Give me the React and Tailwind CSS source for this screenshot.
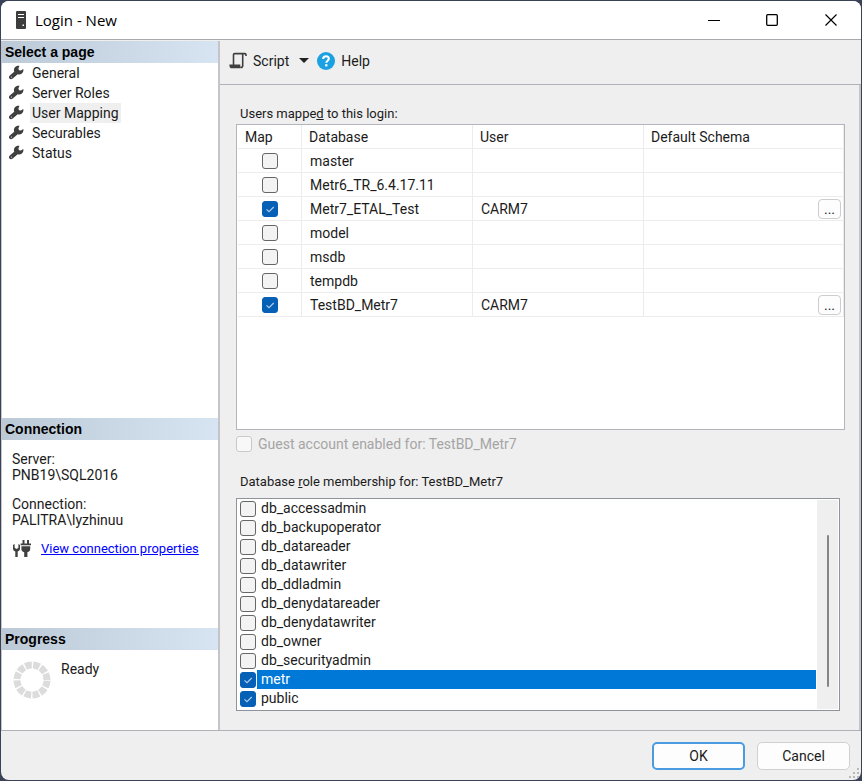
import React from 'react';

const pages = ['General', 'Server Roles', 'User Mapping', 'Securables', 'Status'];

const databases = [
  { name: 'master' },
  { name: 'Metr6_TR_6.4.17.11' },
  { name: 'Metr7_ETAL_Test', user: 'CARM7' },
  { name: 'model' },
  { name: 'msdb' },
  { name: 'tempdb' },
  { name: 'TestBD_Metr7', user: 'CARM7' },
];

const roles = [
  'db_accessadmin',
  'db_backupoperator',
  'db_datareader',
  'db_datawriter',
  'db_ddladmin',
  'db_denydatareader',
  'db_denydatawriter',
  'db_owner',
  'db_securityadmin',
  'metr',
  'public',
];

const WrenchIcon = () => (
  <svg width="16" height="16" viewBox="0 0 16 16" className="shrink-0">
    <path
      d="M11.500.8 10.400 3.400l.6 1.900 1.900.2L15.300 4c.4 1.800-.1 3.400-1.400 4.500-1.200 1-2.700 1.200-4.200.8l-5 4.300c-1 .9-2.400.9-3.200 0-.8-.9-.7-2.300.3-3.200L6.200 6.800C5.600 5 5.900 3.400 7.200 2.100 8.400.9 9.900.5 11.500.8Z"
      fill="#3f3f3f"
    />
    <circle cx="3.400" cy="12" r=".6" fill="#fff" />
  </svg>
);

const ServerIcon = () => (
  <svg width="12" height="18" viewBox="0 0 12 18">
    <rect x="1" width="10" height="18" rx="1" fill="#3d3d3d" />
    <path d="M3 3.500h6M3 6.500h6" stroke="#fff" strokeWidth="1.200" />
    <rect x="7.500" y="13.500" width="1.500" height="1.500" fill="#fff" />
  </svg>
);

const ScriptIcon = () => (
  <svg width="18" height="18" viewBox="0 0 18 18" fill="none" stroke="#3f3f3f" strokeWidth="1.600">
    <path d="M17 4V2.800c0-.8-.4-1.200-1.200-1.200H5.600c-.7 0-1.100.4-1.100 1.100V13" />
    <path d="M13.700 2v11.400c0 1.300-.6 2-1.700 2" />
    <path d="M1.200 13.200h9.300v1.100c0 .8.500 1.200 1.300 1.200H2.800c-1 0-1.600-.6-1.600-2.300Z" fill="#3f3f3f" />
  </svg>
);

const HelpIcon = () => (
  <svg width="18" height="18" viewBox="0 0 18 18">
    <circle cx="9" cy="9" r="9" fill="#1ba1e2" />
    <path d="M6.200 6.900C6.200 5.200 7.400 4.200 9 4.200s2.800 1 2.800 2.500c0 2-2.500 2-2.500 4.100" fill="none" stroke="#fff" strokeWidth="2.100" />
    <rect x="8.200" y="12.200" width="2.200" height="2.200" fill="#fff" />
  </svg>
);

const PlugIcon = () => (
  <svg width="18" height="18" viewBox="0 0 18 18" fill="#3f3f3f">
    <path d="M0 5v3.500c0 1.600.9 2.500 2.300 2.900V17h2.400v-5.600C6.100 11 7 10.100 7 8.500V5L5.400 4v3.800L3.500 8.900 1.600 7.800V4Z" />
    <path d="M9.500 0h2v3.500h2.500V0h2v3.500H18v1.700H7.600V3.500h1.900ZM8.400 6.200h8.800V9c0 1.700-1 2.800-2.800 3.200V17h-3.200v-4.800C9.400 11.800 8.400 10.700 8.400 9Z" />
  </svg>
);

const Spinner = () => (
  <svg width="38" height="38" viewBox="0 0 38 38">
    <circle cx="19" cy="19" r="15" fill="none" stroke="#dcdcdc" strokeWidth="7" strokeDasharray="6.500 1.354" strokeDashoffset="-.68" />
  </svg>
);

const CheckBox = (props) => (
  <span className="inline-grid shrink-0 align-middle">
    <input
      type="checkbox"
      className="peer col-start-1 row-start-1 size-4 appearance-none rounded-[3px] border border-[#666] bg-[#f3f3f3] checked:border-[#0560b6] checked:bg-[#0560b6] disabled:border-[#c9c9c9] disabled:bg-[#f8f8f8]"
      {...props}
    />
    <svg viewBox="0 0 16 16" className="pointer-events-none invisible col-start-1 row-start-1 size-4 peer-checked:visible" fill="none" stroke="#b4d0ec">
      <path d="M4.500 8.300 7 10.700 11.700 6" strokeWidth="1.100" />
    </svg>
  </span>
);

const PanelTitle = ({ children }) => (
  <h2 className="h-[22px] bg-linear-to-r from-[#bccad8] to-[#d7e5f3] pl-[3px] font-['Liberation_Sans',Arial,sans-serif] text-sm leading-[22px] font-bold text-black">
    {children}
  </h2>
);

const TitleBar = () => (
  <header className="flex h-[39px] shrink-0 items-center border-b border-[#a9a9ad] bg-white pl-3.5">
    <ServerIcon />
    <h1 className="ml-2 flex-1 font-['Open_Sans',sans-serif] text-[15px] text-black">Login - New</h1>
    <button aria-label="Minimize" className="grid h-9 w-[58px] place-items-center">
      <svg width="12" height="12" stroke="#000"><path d="M0 6.500h12" /></svg>
    </button>
    <button aria-label="Maximize" className="grid h-9 w-[58px] place-items-center">
      <svg width="12" height="12" fill="none" stroke="#000" strokeWidth="1.300"><rect x=".7" y=".7" width="10.600" height="10.600" rx="1" /></svg>
    </button>
    <button aria-label="Close" className="grid h-9 w-[60px] place-items-center">
      <svg width="12" height="12" stroke="#000" strokeWidth="1.200"><path d="m.5.5 11 11m0-11-11 11" /></svg>
    </button>
  </header>
);

const Sidebar = () => (
  <aside className="flex w-[219px] shrink-0 flex-col border-r-2 border-l border-[#c4c4ca] bg-white">
    <section className="flex-1">
      <PanelTitle>Select a page</PanelTitle>
      <nav>
        {pages.map((page) => (
          <a key={page} href="#" className="flex h-5 items-center gap-1.5 pl-1.5">
            <WrenchIcon />
            <span className={page === 'User Mapping' ? 'bg-[#efefef] px-[2px]' : 'px-[2px]'}>{page}</span>
          </a>
        ))}
      </nav>
    </section>

    <section className="h-[210px]">
      <PanelTitle>Connection</PanelTitle>
      <dl className="mt-[11px] pl-2.5 leading-4">
        <dt>Server:</dt>
        <dd className="mb-[13px]">PNB19\SQL2016</dd>
        <dt>Connection:</dt>
        <dd>PALITRA\lyzhinuu</dd>
      </dl>
      <div className="mt-[11px] flex items-center gap-2.5 pl-[11px]">
        <PlugIcon />
        <a href="#" className="text-[13px] leading-5 text-[#0000ff] underline">View connection properties</a>
      </div>
    </section>

    <section className="h-[102px]">
      <PanelTitle>Progress</PanelTitle>
      <div className="flex items-start gap-2.5 pt-[9px] pl-[11px]">
        <div className="pt-0.5">
          <Spinner />
        </div>
        <p>Ready</p>
      </div>
    </section>
  </aside>
);

const MappingTable = () => (
  <div className="flex-1 border border-[#b4b4bc] bg-white pl-px">
    <table className="w-full table-fixed border-separate border-spacing-0 text-left">
      <thead>
        <tr className="h-6 *:border-r *:border-b *:border-[#ececec] *:py-0 *:pl-[7px] *:font-normal">
          <th className="w-16">Map</th>
          <th className="w-[171px]">Database</th>
          <th className="w-[171px]">User</th>
          <th>Default Schema</th>
        </tr>
      </thead>
      <tbody>
        {databases.map((db) => (
          <tr key={db.name} className="h-6 *:border-r *:border-b *:border-[#ececec] *:p-0">
            <td className="text-center leading-none">
              <CheckBox aria-label={`Map ${db.name}`} defaultChecked={Boolean(db.user)} />
            </td>
            <td><span className="pl-2">{db.name}</span></td>
            <td><span className="pl-2">{db.user}</span></td>
            <td>
              {db.user && (
                <button aria-label={`Default schema for ${db.name}`} className="mr-0.5 ml-auto block h-5 w-[23px] rounded-[4px] border border-[#cdcdcd] bg-[#fdfdfd] leading-4">
                  ...
                </button>
              )}
            </td>
          </tr>
        ))}
      </tbody>
    </table>
  </div>
);

const RoleList = () => (
  <div className="mr-[5px] flex border border-[#8e939c] bg-white">
    <ul className="flex-1 pb-0.5 pl-[3px]">
      {roles.map((role) => {
        const selected = role === 'metr';
        return (
          <li key={role}>
            <label className="flex h-[19px] items-center">
              <CheckBox defaultChecked={selected || role === 'public'} />
              <span className={selected ? 'ml-px flex-1 bg-[#0078d7] pl-1 leading-[19px] text-white' : 'ml-px flex-1 pl-1 leading-[19px]'}>{role}</span>
            </label>
          </li>
        );
      })}
    </ul>
    <div className="my-px mr-px ml-px flex w-[21px] justify-center bg-[#efefef] pt-[35px] pb-[22px]">
      <div className="w-[2px] rounded bg-[#858585]" />
    </div>
  </div>
);

export default function App() {
  return (
    <div className="flex min-h-screen bg-[#3a4258] p-px font-[Roboto,sans-serif] text-sm leading-5 text-[#1b1b1b]">
      <div className="flex flex-1 flex-col overflow-hidden rounded-lg bg-[#efefef]">
        <TitleBar />

        <div className="flex flex-1 border-b border-[#b0b0b6] pt-px">
          <Sidebar />
          <main className="flex min-w-0 flex-1 flex-col">
            <div className="flex h-11 items-center border-b border-[#b0b0b6] pb-1 pl-[9px]">
              <button className="flex items-center gap-1.5">
                <ScriptIcon />
                Script
              </button>
              <button aria-label="Script options" className="ml-2.5">
                <svg width="10" height="5"><path d="M0 0h10L5 5Z" fill="#222" /></svg>
              </button>
              <button className="ml-2 flex items-center gap-1.5">
                <HelpIcon />
                Help
              </button>
            </div>

            <div className="flex flex-1 flex-col border-r-2 border-[#c4c4ca] pt-[19px] pr-3.5 pb-[19px] pl-4">
              <p className="pl-1 text-[13px] leading-5">Users mappe<u>d</u> to this login:</p>
              <MappingTable />
              <label className="mt-1.5 flex h-4 items-center gap-1.5 text-[#a5a5a5]">
                <CheckBox disabled />
                Guest account enabled for: TestBD_Metr7
              </label>
              <p className="mt-5 mb-1.5 pl-1 text-[13px] leading-5">Database <u>r</u>ole membership for: TestBD_Metr7</p>
              <RoleList />
            </div>
          </main>
        </div>

        <footer className="relative flex h-[49px] shrink-0 items-center justify-end gap-3 pr-[11px]">
          <button className="h-7 w-[93px] rounded-[5px] border-2 border-[#4a9be0] bg-[#fdfdfd]">OK</button>
          <button className="h-7 w-[93px] rounded-[5px] border border-[#d0d0d0] bg-[#fdfdfd]">Cancel</button>
          <svg width="11" height="11" className="absolute right-px bottom-px" fill="#b9b9b9">
            <path d="M8 0h2v2H8zM4 4h2v2H4zM8 4h2v2H8zM0 8h2v2H0zM4 8h2v2H4zM8 8h2v2H8z" />
          </svg>
        </footer>
      </div>
    </div>
  );
}
